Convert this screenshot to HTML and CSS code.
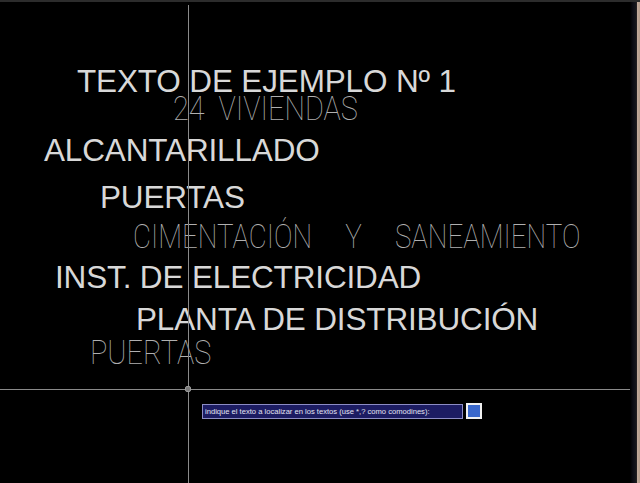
FILE: index.html
```html
<!DOCTYPE html>
<html lang="es">
<head>
<meta charset="utf-8">
<title>Buscar texto</title>
<link rel="stylesheet" href="styles.css">
</head>
<body>
<div class="screen">
  <div class="canvas">
    <div class="txt bold t1">TEXTO DE EJEMPLO Nº 1</div>
    <div class="txt thin t2"><span>24&nbsp;&nbsp;VIVIENDAS</span></div>
    <div class="txt bold t3">ALCANTARILLADO</div>
    <div class="txt bold t4">PUERTAS</div>
    <div class="txt thin t5"><span>CIMENTACIÓN&nbsp;&nbsp;&nbsp;&nbsp;&nbsp;Y&nbsp;&nbsp;&nbsp;&nbsp;&nbsp;SANEAMIENTO</span></div>
    <div class="txt bold t6">INST. DE ELECTRICIDAD</div>
    <div class="txt bold t7">PLANTA DE DISTRIBUCIÓN</div>
    <div class="txt thin t8"><span>PUERTAS</span></div>

    <div class="cross-v"></div>
    <div class="cross-h"></div>
    <div class="cross-box"></div>

    <div class="prompt">
      <div class="prompt-label">indique el texto a localizar en los textos (use *,? como comodines):</div>
      <div class="prompt-input"></div>
    </div>
  </div>
  <div class="edge"></div>
</div>
</body>
</html>
```

FILE: styles.css
```css
html, body {
  margin: 0;
  padding: 0;
  background: #000;
}

.screen {
  width: 640px;
  height: 483px;
  display: flex;
  background: #000;
  border-top: 2px solid #2c2c2c;
  box-sizing: border-box;
  overflow: hidden;
}

.canvas {
  position: relative;
  flex: 1;
  height: 100%;
}

.edge {
  width: 10px;
  background: linear-gradient(to right, #000 0px, #0c0c14 3px, #17171c 6px, #2a2426 7px, #c4ad9e 7px, #b59c8c 10px);
}

.txt {
  position: absolute;
  white-space: nowrap;
  line-height: 0.8;
}

.bold {
  font-family: "Liberation Sans", Arial, sans-serif;
  font-size: 31.5px;
  color: #d8d8d8;
  letter-spacing: -0.15px;
}

.thin {
  font-family: "Roboto", "DejaVu Sans", sans-serif;
  font-weight: 100;
  font-size: 34px;
  color: #b0b0b0;
}

.thin span {
  display: inline-block;
  transform-origin: 0 0;
  transform: scaleX(0.85);
}

.t5 span {
  transform: scaleX(0.815);
}

.t1 { left: 77px; top: 67px; }
.t2 { left: 173px; top: 93px; }
.t3 { left: 44px; top: 136px; }
.t4 { left: 100px; top: 183px; }
.t5 { left: 133px; top: 221px; }
.t6 { left: 55px; top: 263px; }
.t7 { left: 136px; top: 305px; }
.t8 { left: 90px; top: 337px; }

.cross-v {
  position: absolute;
  left: 188px;
  top: 3px;
  width: 1px;
  height: 480px;
  background: #8a8a8a;
}

.cross-h {
  position: absolute;
  left: 0;
  top: 387px;
  width: 100%;
  height: 1px;
  background: #8a8a8a;
}

.cross-box {
  position: absolute;
  left: 185px;
  top: 384px;
  width: 6px;
  height: 6px;
  border-radius: 2px;
  background: #7a7a7a;
  border: 1px solid #9a9a9a;
  box-sizing: border-box;
}

.prompt {
  position: absolute;
  left: 202px;
  top: 401px;
  display: flex;
  align-items: center;
  gap: 3px;
}

.prompt-label {
  height: 15px;
  width: 261px;
  box-sizing: border-box;
  border: 1px solid #8c8cc4;
  background: #1c1c62;
  color: #e4e4f4;
  font-family: "Liberation Sans", Arial, sans-serif;
  font-size: 7.6px;
  line-height: 13px;
  padding: 0 2px;
  white-space: nowrap;
  overflow: hidden;
}

.prompt-input {
  width: 16px;
  height: 16px;
  box-sizing: border-box;
  border: 2px solid #f0f0f0;
  background: #3a68cc;
}
```
